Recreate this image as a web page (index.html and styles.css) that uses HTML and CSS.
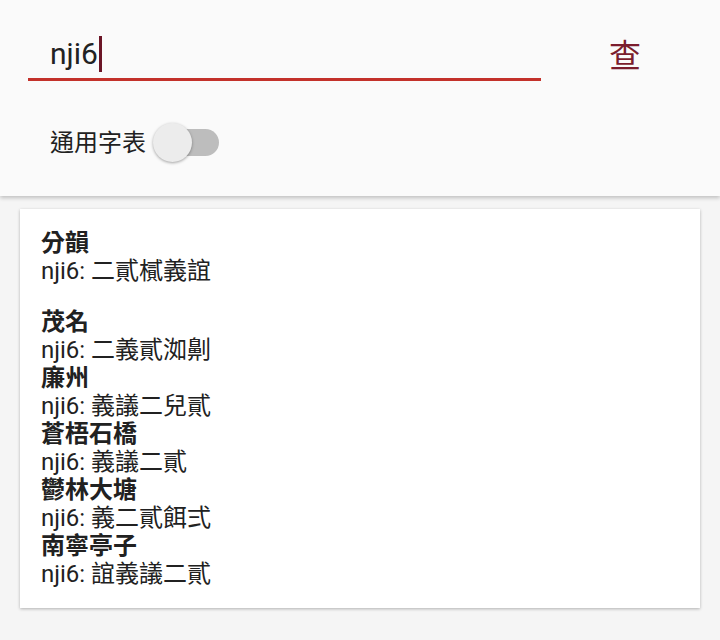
FILE: index.html
```html
<!DOCTYPE html>
<html lang="zh-Hant">
<head>
<meta charset="utf-8">
<title>查</title>
<link rel="stylesheet" href="styles.css">
</head>
<body>
<header class="top">
  <div class="search-row">
    <div class="field"><span class="field-text">nji6</span><span class="caret"></span></div>
    <div class="go">查</div>
  </div>
  <div class="toggle-row">
    <span class="toggle-label">通用字表</span>
    <span class="switch"><span class="track"></span><span class="thumb"></span></span>
  </div>
</header>
<main class="card">
  <section class="group">
    <div class="place">分韻</div>
    <div class="line">nji6: 二貳樲義誼</div>
  </section>
  <section class="group">
    <div class="place">茂名</div>
    <div class="line">nji6: 二義貳洳劓</div>
    <div class="place">廉州</div>
    <div class="line">nji6: 義議二兒貳</div>
    <div class="place">蒼梧石橋</div>
    <div class="line">nji6: 義議二貳</div>
    <div class="place">鬱林大塘</div>
    <div class="line">nji6: 義二貳餌弍</div>
    <div class="place">南寧亭子</div>
    <div class="line">nji6: 誼義議二貳</div>
  </section>
</main>
</body>
</html>
```
FILE: styles.css
```css
html, body {
  margin: 0;
  padding: 0;
}
body {
  background: #f5f5f5;
  font-family: Roboto, "Noto Sans CJK TC", sans-serif;
  color: #212121;
  width: 720px;
  height: 640px;
  overflow: hidden;
}
.top {
  background: #fafafa;
  height: 196px;
  box-sizing: border-box;
  padding-top: 36px;
  box-shadow: 0 2px 4px rgba(0, 0, 0, 0.22);
  position: relative;
  z-index: 1;
}
.search-row {
  display: flex;
  align-items: flex-start;
}
.field {
  margin-left: 28px;
  width: 513px;
  box-sizing: border-box;
  padding-left: 22px;
  padding-bottom: 6px;
  border-bottom: 3px solid #c3312a;
  font-size: 30px;
  line-height: 36px;
  height: 45px;
  color: #222;
}
.caret {
  display: inline-block;
  width: 3px;
  height: 36px;
  background: #6b1526;
  vertical-align: top;
  margin-left: 1px;
}
.go {
  width: 168px;
  text-align: center;
  font-size: 32px;
  line-height: 40px;
  color: #7b1d2d;
  margin-top: 0;
}
.toggle-row {
  display: flex;
  align-items: center;
  margin-left: 50px;
  margin-top: 42px;
  height: 40px;
}
.toggle-label {
  font-size: 24px;
  line-height: 28px;
  width: 96px;
}
.switch {
  position: relative;
  width: 66px;
  height: 40px;
  margin-left: 7px;
}
.track {
  position: absolute;
  left: 7px;
  top: 6px;
  width: 59px;
  height: 27px;
  border-radius: 14px;
  background: #bdbdbd;
}
.thumb {
  position: absolute;
  left: 0;
  top: 0;
  width: 39px;
  height: 39px;
  border-radius: 50%;
  background: #ececec;
  box-shadow: 0 1px 3px rgba(0, 0, 0, 0.35);
}
.card {
  display: block;
  margin: 13px 20px 0;
  background: #fff;
  padding: 20px 21px 20px;
  box-shadow: 0 1px 3px rgba(0, 0, 0, 0.28);
  font-size: 24px;
  line-height: 28px;
}
.group + .group {
  margin-top: 23px;
}
.place {
  font-weight: bold;
}
```
